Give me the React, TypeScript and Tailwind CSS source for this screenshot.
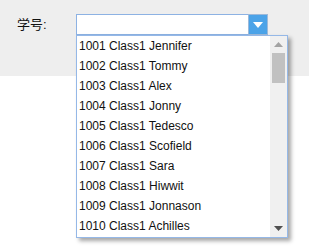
import { FC } from 'react';

const STUDENTS = [
  'Jennifer',
  'Tommy',
  'Alex',
  'Jonny',
  'Tedesco',
  'Scofield',
  'Sara',
  'Hiwwit',
  'Jonnason',
  'Achilles',
];

const ScrollBar: FC = () => (
  <div className="flex w-[17px] shrink-0 flex-col items-center bg-[#f0f0f0]">
    {/* up arrow */}
    <div className="flex h-[17px] w-full items-center justify-center">
      <svg width="9" height="5" viewBox="0 0 9 5">
        <path d="M0 5 L4.5 0 L9 5 Z" fill="#a3a3a3" />
      </svg>
    </div>
    <div className="h-[30px] w-[13px] bg-[#c1c1c1]" />
    <div className="flex-1" />
    {/* down arrow */}
    <div className="flex h-[17px] w-full items-center justify-center">
      <svg width="9" height="5" viewBox="0 0 9 5">
        <path d="M0 0 L9 0 L4.5 5 Z" fill="#505050" />
      </svg>
    </div>
  </div>
);

const App: FC = () => {
  return (
    <div
      className="relative h-[251px] w-[309px] overflow-hidden bg-white text-[#111]"
      style={{ fontFamily: '"Liberation Sans", "Noto Sans CJK SC", sans-serif' }}
    >
      {/* Form band */}
      <section className="flex h-[76px] w-full items-start bg-[#eeeeee] pl-[17px] pt-[14px]">
        <label className="flex h-[21px] w-[59px] items-center text-[13px]">学号:</label>
        <div className="flex h-[21px] w-[192px] border border-[#8db2e3] bg-white">
          <div className="flex-1" />
          <div className="-my-px -mr-px flex w-[20px] items-center justify-center border border-[#9db9d9] bg-[#4ba3e8]">
            <svg width="10" height="6" viewBox="0 0 10 6">
              <path d="M0 0 L10 0 L5 6 Z" fill="#ffffff" />
            </svg>
          </div>
        </div>
      </section>

      {/* Dropdown list */}
      <div className="absolute left-[76px] top-[35px] flex h-[203px] w-[212px] border border-[#95b8e7] bg-white shadow-[3px_3px_4px_rgba(0,0,0,0.35)]">
        <ul className="flex-1">
          {STUDENTS.map((name, i) => (
            <li key={i} className="h-[20px] whitespace-nowrap px-[2px] text-[12px] leading-[20px]">
              {`10${String(i + 1).padStart(2, '0')} Class1 ${name}`}
            </li>
          ))}
        </ul>
        <ScrollBar />
      </div>
    </div>
  );
};

export default App;
